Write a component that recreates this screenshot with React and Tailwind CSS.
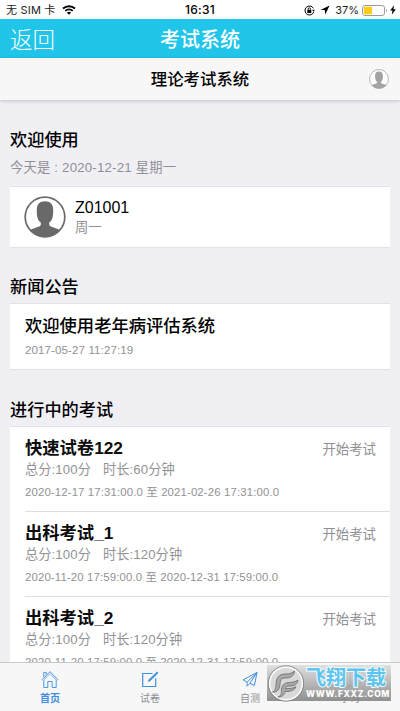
import React from 'react';

const exams = [
  { name: '快速试卷122', minutes: 60, start: '2020-12-17 17:31:00.0', end: '2021-02-26 17:31:00.0' },
  { name: '出科考试_1', minutes: 120, start: '2020-11-20 17:59:00.0', end: '2020-12-31 17:59:00.0' },
  { name: '出科考试_2', minutes: 120, start: '2020-11-20 17:59:00.0', end: '2020-12-31 17:59:00.0' }
];

const Avatar = ({ className }) => (
  <svg viewBox="0 0 42 42" className={className}>
    <circle cx="21" cy="21" r="19.8" fill="#fff" stroke="currentColor" strokeWidth="1.7" />
    <path
      fill="currentColor"
      d="M21 5.2c5.4 0 8.3 3.1 8.2 8.8.1 4.7-.3 7.6-1.6 9.9-.6 1.2-1.6 2.1-2.4 2.7V29c1 2.3 7.3 2.9 11.3 5.2A20 20 0 0 1 21 41 20 20 0 0 1 5.5 34.2c4-2.3 10.3-2.9 11.3-5.2v-2.4c-.8-.6-1.8-1.5-2.4-2.7-1.3-2.3-1.7-5.2-1.6-9.9-.1-5.7 2.8-8.8 8.2-8.8z"
    />
  </svg>
);

const StatusBar = () => (
  <div className="grid h-[19px] shrink-0 grid-cols-[1fr_auto_1fr] items-center bg-white text-black">
    <div className="flex items-center pl-[6px]">
      <span className="pt-[1px] font-[Inter,'Noto_Sans_CJK_SC',sans-serif] text-[11px] leading-[18px] tracking-[0.2px] whitespace-pre text-[#222]">无 SIM 卡</span>
      <svg viewBox="0 0 14 10" className="ml-[6px] h-[10px] w-[14px]" fill="none" stroke="currentColor">
        <path d="M1 3.5a9 9 0 0 1 12 0" strokeWidth="1.9" />
        <path d="M3.3 5.9a5.5 5.5 0 0 1 7.4 0" strokeWidth="1.8" />
        <path d="M7 9.8 4.9 7.7a3 3 0 0 1 4.2 0z" fill="currentColor" stroke="none" />
      </svg>
    </div>
    <span className="pt-[1px] font-[Inter,sans-serif] text-[12px] leading-[18px] font-medium tracking-[0.3px]">16:31</span>
    <div className="flex items-center justify-end pt-[1px] pr-[4px]">
      <svg viewBox="0 0 11 11" className="h-[11px] w-[11px]" fill="none" stroke="currentColor">
        <path d="M9.4 3.3A4.5 4.5 0 1 0 9.8 6.8" strokeWidth="1" />
        <path d="M8.1 4.8h2.7L9.5 6.8z" fill="currentColor" stroke="none" />
        <rect x="3.3" y="4.9" width="4" height="3.1" fill="currentColor" stroke="none" />
        <path d="M4.2 5V3.9a1.1 1.1 0 0 1 2.2 0V5" strokeWidth=".9" />
      </svg>
      <svg viewBox="0 0 10 10" className="ml-[5px] h-[10px] w-[10px]" fill="currentColor">
        <path d="M9.6.6.5 5h4.3l.4 4.5z" />
      </svg>
      <span className="ml-[5px] font-[Inter,sans-serif] text-[11px] leading-[18px] text-[#222]">37%</span>
      <svg viewBox="0 0 26 11" className="ml-[3px] h-[11px] w-[26px]">
        <rect x=".5" y=".5" width="22" height="10" rx="2.4" fill="#fff" stroke="#9a9a9a" />
        <rect x="1.8" y="1.8" width="8.2" height="7.4" rx="1" fill="#fecb16" />
        <path d="M24 3.8c1.2.3 1.2 3.1 0 3.4z" fill="#9a9a9a" />
      </svg>
      <svg viewBox="0 0 6 10" className="ml-[2px] h-[10px] w-[6px]" fill="currentColor">
        <path d="M4 .3.2 5.6h2.3L1.8 9.8 5.8 4.2H3.4z" />
      </svg>
    </div>
  </div>
);

const ExamRow = ({ exam }) => (
  <li className="ml-[15px] h-[85px] border-b border-[#dedee0] pt-[10px] pr-[14px] last:border-b-0">
    <div className="flex items-center justify-between">
      <h3 className="text-[17.3px] leading-[23px] font-bold text-[#0c0c0c]">{exam.name}</h3>
      <span className="pt-[2px] text-[13.4px] leading-[20px] text-[#8f8f94]">开始考试</span>
    </div>
    <p className="text-[13.2px] leading-[20px] tracking-[0.1px] text-[#929296]">
      <span>总分:100分</span>
      <span className="ml-[12px]">时长:{exam.minutes}分钟</span>
    </p>
    <p className="pt-[3px] text-[11.4px] leading-[18px] tracking-[0.13px] whitespace-nowrap text-[#929296]">
      {exam.start} 至 {exam.end}
    </p>
  </li>
);

const Tab = ({ label, active, children }) => (
  <a className={active ? 'flex w-[100px] flex-col items-center text-[#3b8ee0]' : 'flex w-[100px] flex-col items-center text-[#8f8f94]'}>
    {children}
    <span className={active ? 'mt-[3px] text-[10px] leading-[14px] font-bold' : 'mt-[3px] text-[10px] leading-[14px]'}>{label}</span>
  </a>
);

const TabBar = () => (
  <nav className="flex h-[49px] shrink-0 border-t border-[#c9c9cc] bg-[#f7f7f8] pt-[7px]">
    <Tab label="首页" active>
      <svg viewBox="0 0 18 19" className="h-[19px] w-[18px]" fill="none" stroke="#4a98e2" strokeWidth="1">
        <path d="M.9 9.9 9 1.6l8.1 8.3" />
        <path d="M1.9 10.8 9 3.7l7.1 7.1" strokeWidth=".7" />
        <path d="M2.8 7.2V2.4h2.4v2.4M2.8 10.2v7.3h4v-6h4.4v6h4v-7.3" />
      </svg>
    </Tab>
    <Tab label="试卷">
      <svg viewBox="0 0 18 19" className="h-[19px] w-[18px]" fill="none" stroke="#4190de" strokeWidth="1.2">
        <path d="M11.6 3.5H1.7v13h13V8.2" />
        <path d="m7.2 11.6.6-1.9 8.3-7.9 1.1 1.2-8.1 7.9z" fill="#4190de" strokeWidth=".5" />
      </svg>
    </Tab>
    <Tab label="自测">
      <svg viewBox="0 0 18 19" className="h-[19px] w-[18px]" fill="none" stroke="#4190de" strokeWidth="1" strokeLinejoin="round">
        <path d="M16 2.5 2 9.8l4.1 2.4zM16 2.5l-2.6 12.9-4.5-2zM6.1 12.2v4l2.8-2.8" />
      </svg>
    </Tab>
    <Tab label="学习">
      <svg viewBox="0 0 18 19" className="h-[19px] w-[18px]" fill="none" stroke="#4678c8" strokeWidth="1.1">
        <path d="M6 2.5q3 0 3 2v10q0 2-3 2M12 2.5q-3 0-3 2v10q0 2 3 2" />
      </svg>
    </Tab>
  </nav>
);

const Watermark = () => (
  <div className="absolute top-[665px] left-[267px] flex h-[36px] w-[124px] items-center bg-linear-to-b from-[#dedede]/90 to-[#858585]/90">
    <svg viewBox="0 0 37 37" className="h-[37px] w-[37px] shrink-0">
      <circle cx="19" cy="18.5" r="16.5" fill="#d9d9d9" stroke="#fafafa" strokeWidth="1.8" />
      <circle cx="19" cy="18.5" r="17.7" fill="none" stroke="#777" strokeWidth=".8" />
      <g fill="#a9a9a9" stroke="#717171" strokeWidth=".9" strokeLinejoin="round">
        <path d="M5.5 27c4-1 3-6 4-11 1-5.5 4.5-7 9.5-7 4 0 6.5-1 8.500-3-.5 5-3.500 7-8.500 7-5 0-5.600 1.500-6 6-.6 5.500-2.500 8.500-7.500 8z" />
        <path d="M11 32c4.500-1.500 3-5 3.500-8 .6-4.500 4-6.500 8-6.500 3.500 0 6.500-1 8.500-2.500-.7 4-3 6-8 6-3 0-4.300.8-4.700 2.600 4.500.2 7.700-.3 10.700-1.800-1.500 3.500-5 4.700-11 4.800-.8 3.200-3 5.900-7 5.400z" />
      </g>
    </svg>
    <div className="flex flex-col items-start pt-[1px] pl-[2px] whitespace-nowrap">
      <span className="text-[20px] leading-[22px] font-bold text-[#5cc4ee] [-webkit-text-stroke:2px_#f4fbff] [paint-order:stroke_fill]">飞翔下载</span>
      <span className="font-[Inter,sans-serif] text-[8.5px] leading-[11px] font-extrabold tracking-[0.6px] text-white">WWW.FXXZ.COM</span>
    </div>
  </div>
);

const App = () => {
  return (
    <div className="relative flex h-[711px] w-[400px] flex-col overflow-hidden bg-[#efeff4] font-['Liberation_Sans','Noto_Sans_CJK_SC',sans-serif]">
      <StatusBar />
      <header className="grid h-[39px] shrink-0 grid-cols-[1fr_auto_1fr] items-center bg-[#20c5e9] pt-[4px] text-white">
        <a className="pl-[10px] text-[22.5px] leading-[35px] font-light">返回</a>
        <h1 className="text-[20px] leading-[35px] font-medium">考试系统</h1>
      </header>
      <div className="z-10 grid h-[42px] shrink-0 grid-cols-[1fr_auto_1fr] items-center bg-[#f7f7f7] shadow-[0_1px_4px_rgba(0,0,0,0.2)]">
        <h2 className="col-start-2 text-[16.4px] leading-[24px] font-medium text-black">理论考试系统</h2>
        <Avatar className="mr-[11px] h-[20px] w-[20px] justify-self-end text-[#a3a3a3]" />
      </div>

      <main className="min-h-0 flex-1 overflow-hidden px-[10px]">
        {/* Welcome */}
        <h2 className="pt-[28px] text-[17.2px] leading-[24px] font-medium text-black">欢迎使用</h2>
        <p className="pt-[6px] text-[13.3px] leading-[20px] tracking-[0.18px] text-[#8f8f94]">今天是 : 2020-12-21 星期一</p>
        <section className="mt-[8px] flex h-[62px] items-center border-y border-[#e4e4e8] bg-white pl-[14px]">
          <Avatar className="h-[42px] w-[42px] text-[#696969]" />
          <div className="ml-[9px] pt-[2px]">
            <div className="text-[16px] leading-[20px] text-black">Z01001</div>
            <div className="text-[13.3px] leading-[20px] text-[#8f8f94]">周一</div>
          </div>
        </section>

        {/* News */}
        <h2 className="pt-[27px] text-[17.2px] leading-[24px] font-medium text-black">新闻公告</h2>
        <section className="mt-[4px] h-[67px] border-y border-[#e2e2e6] bg-white pt-[9px] pl-[15px]">
          <h3 className="text-[17.3px] leading-[26px] font-medium text-black">欢迎使用老年病评估系统</h3>
          <p className="pt-[1px] text-[11.6px] leading-[19px] tracking-[0.08px] text-[#929296]">2017-05-27 11:27:19</p>
        </section>

        {/* Exams in progress */}
        <h2 className="pt-[28px] text-[17.2px] leading-[24px] font-medium text-black">进行中的考试</h2>
        <ul className="mt-[4px] border-y border-[#e2e2e6] bg-white">
          {exams.map((exam) => (
            <ExamRow key={exam.name} exam={exam} />
          ))}
        </ul>
      </main>

      <TabBar />
      <Watermark />
    </div>
  );
};

export default App;
